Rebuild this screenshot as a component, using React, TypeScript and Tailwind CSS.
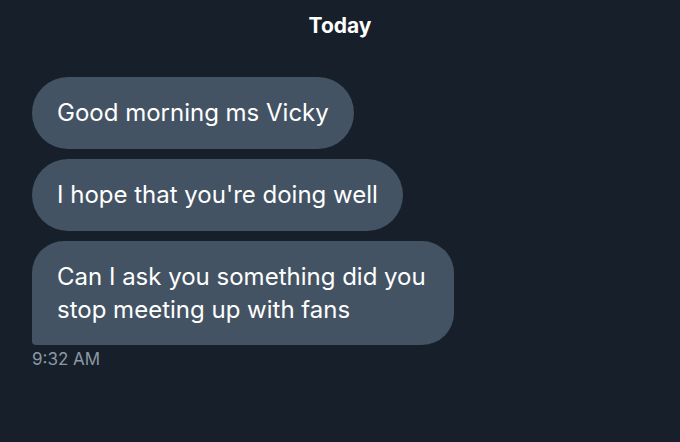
import React from "react";

const messages = [
  "Good morning ms Vicky",
  "I hope that you're doing well",
  "Can I ask you something did you stop meeting up with fans",
];

export default function App() {
  return (
    <div
      className="w-[680px] h-[442px] bg-[#17202a] text-white overflow-hidden"
      style={{ fontFamily: "Inter, 'Noto Sans', sans-serif" }}
    >
      <div className="pt-[12px] text-center text-[21px] font-bold leading-[28px]">Today</div>

      <div className="flex flex-col items-start gap-[10px] pl-[32px] mt-[37px]">
        {messages.map((m, i) => {
          const last = i === messages.length - 1;
          return (
            <div
              key={i}
              className={`bg-[#435363] px-[25px] text-[24px] ${
                last
                  ? "max-w-[422px] py-[19px] leading-[33px] rounded-[32px] rounded-bl-[4px]"
                  : "py-[18px] leading-[36px] rounded-[36px]"
              }`}
            >
              {m}
            </div>
          );
        })}
        <div className="-mt-[6px] text-[17px] leading-[20px] text-[#8b98a5]">9:32 AM</div>
      </div>
    </div>
  );
}
